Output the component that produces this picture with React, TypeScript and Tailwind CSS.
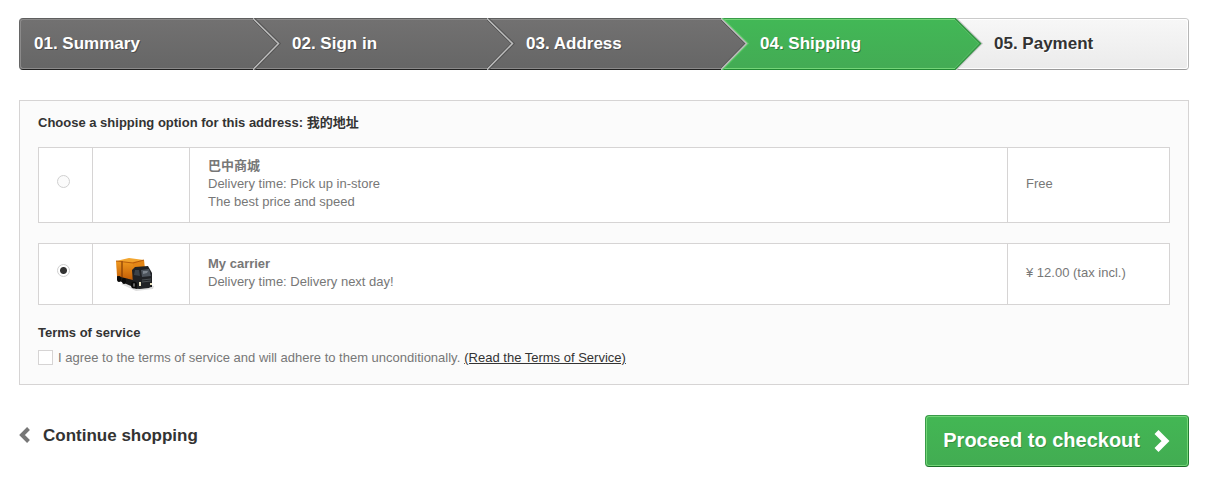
import { useState } from "react"
import clsx from "clsx"

const steps = [
  { label: "01. Summary", state: "done" },
  { label: "02. Sign in", state: "done" },
  { label: "03. Address", state: "done" },
  { label: "04. Shipping", state: "current" },
  { label: "05. Payment", state: "todo" },
]

const carriers = [
  {
    id: "store",
    name: "巴中商城",
    lines: ["Delivery time: Pick up in-store", "The best price and speed"],
    price: "Free",
    hasLogo: false,
  },
  {
    id: "carrier",
    name: "My carrier",
    lines: ["Delivery time: Delivery next day!"],
    price: "¥ 12.00 (tax incl.)",
    hasLogo: true,
  },
]

const stepStyles: Record<string, string> = {
  done: "border-t-[#5f5f5f] border-b-[#222222] border-x-[#666666] from-[#727171] to-[#666666] text-white [text-shadow:1px_1px_rgba(0,0,0,0.3)]",
  current:
    "border-t-[#399b49] border-b-[#208931] border-x-[#369946] from-[#42b856] to-[#43ab54] text-white [text-shadow:1px_1px_rgba(0,0,0,0.3)]",
  todo: "border-t-[#cacaca] border-b-[#9a9a9a] border-x-[#b7b7b7] from-[#f7f7f7] to-[#ebebeb] text-[#333333] [text-shadow:1px_1px_#ffffff]",
}

const innerStyles: Record<string, string> = {
  done: "border-[#8b8a8a]",
  current: "border-[#74d578]",
  todo: "border-white",
}

// Point of the previous step, laid over the start of the next one
function StepArrow({ from, to }: { from: string; to: string }) {
  const green = from === "current"
  const id = `arrow-${from}-${to}`
  const outer = to === "done" ? "#555555" : to === "current" ? "#5ccb68" : "#cfcccf"
  return (
    <svg className="absolute top-0 left-0 h-[52px] w-[30px]" viewBox="0 0 30 52" aria-hidden="true">
      <defs>
        <linearGradient id={id} x1="0" y1="0" x2="0" y2="1">
          <stop offset="0" stopColor={green ? "#42b856" : "#727171"} />
          <stop offset="1" stopColor={green ? "#43ab54" : "#666666"} />
        </linearGradient>
      </defs>
      <path d="M0 0L25.5 25.5L0 52Z" fill={`url(#${id})`} />
      <path d="M1 0L27 25.5L1 52" fill="none" stroke={outer} strokeWidth="1.5" />
      <path d="M-2 0L24 25.5L-2 52" fill="none" stroke={green ? "#5fc56c" : "#4c4c4c"} strokeWidth="1" />
      <path d="M-0.5 0L25.5 25.5L-0.5 52" fill="none" stroke={green ? "#349444" : "#bcbcbc"} strokeWidth="1.5" />
    </svg>
  )
}

function TruckLogo() {
  return (
    <svg className="block h-10 w-[60px]" viewBox="0 0 60 40" role="img" aria-label="My carrier">
      <defs>
        <linearGradient id="cargo" x1="0" y1="0" x2="0" y2="1">
          <stop offset="0" stopColor="#f09a20" />
          <stop offset="1" stopColor="#c25c05" />
        </linearGradient>
      </defs>
      <path d="M10 31L25 38L42 36L43 33L20 28Z" fill="#dedede" />
      <path d="M6 22L24 27L41 30V34L25 36L20 33L6 27Z" fill="#171717" />
      <path d="M5 8L18 5L33 7L22 10Z" fill="#f2a52f" />
      <path d="M5 8L22 9V27L6 23Z" fill="url(#cargo)" />
      <path d="M22 9L33 7L34 16H22Z" fill="#e38515" />
      <path d="M11 8V24" stroke="#823c05" strokeWidth="1.2" fill="none" />
      <path d="M5 8L22 10L33 7" stroke="#a94e06" strokeWidth="0.8" fill="none" />
      <path d="M21 17L24 14L37 13L41 20V32L38 35L28 36L22 31Z" fill="#202225" />
      <path d="M30 17L38 16L40 23L31 24Z" fill="#4d545c" />
      <path d="M24 17L28 17L29 23L23 22Z" fill="#3b4249" />
      <path d="M32 18L37 18L36 20L32 21Z" fill="#7d858d" />
      <path d="M31 27L40 26M31 29L40 28" stroke="#565a5e" strokeWidth="0.8" />
      <ellipse cx="8" cy="26" rx="2" ry="3" fill="#090909" />
      <ellipse cx="13" cy="28" rx="2" ry="3" fill="#090909" />
      <ellipse cx="23" cy="32" rx="3" ry="3.5" fill="#090909" />
      <ellipse cx="23" cy="32" rx="1" ry="2" fill="#6b6b6b" />
      <path d="M28 29H30V33H28ZM39 30H41V32H39Z" fill="#e8e0c0" />
    </svg>
  )
}

export default function App() {
  const [selected, setSelected] = useState("carrier")
  const [agreed, setAgreed] = useState(false)

  return (
    <main className="bg-white pt-[18px] pr-[26px] pb-3 pl-[19px] font-['Liberation_Sans','Noto_Sans_CJK_SC',sans-serif] text-[13px] leading-[18px] text-[#777777]">
      <ol className="flex">
        {steps.map((step, i) => (
          <li
            key={step.label}
            aria-current={step.state === "current" ? "step" : undefined}
            className="relative flex h-[52px] flex-1"
          >
            <div
              className={clsx(
                "flex flex-1 border-y bg-linear-to-b text-[17px] font-bold",
                stepStyles[step.state],
                i === 0 && "rounded-l-[4px] border-l",
                i === steps.length - 1 && "rounded-r-[4px] border-r"
              )}
            >
              <span
                className={clsx(
                  "flex flex-1 items-center border-y",
                  innerStyles[step.state],
                  i === 0 ? "rounded-l-[3px] border-l pl-[13px]" : "pl-[39px]",
                  i === steps.length - 1 && "rounded-r-[3px] border-r"
                )}
              >
                {step.label}
              </span>
            </div>
            {i > 0 && <StepArrow from={steps[i - 1].state} to={step.state} />}
          </li>
        ))}
      </ol>

      <section className="mt-[30px] border border-[#d6d4d4] bg-[#fbfbfb] px-[18px] pt-[13px] pb-[17px]">
        <h2 className="mb-[15px] font-bold text-[#333333]">
          Choose a shipping option for this address: 我的地址
        </h2>

        <div className="flex flex-col gap-5">
          {carriers.map((carrier) => (
            <table key={carrier.id} className="w-full table-fixed border-collapse bg-white">
              <tbody>
                <tr className="*:border *:border-[#d6d4d4] *:px-[18px] *:pt-[9px] *:pb-[11px]">
                  <td className="w-[54px]">
                    <input
                      type="radio"
                      name="carrier"
                      aria-label={carrier.name}
                      checked={selected === carrier.id}
                      onChange={() => setSelected(carrier.id)}
                      className="mb-[6px] block size-[13px] appearance-none rounded-full border border-[#d0d0d0] bg-[#fbfbfb] checked:bg-[radial-gradient(circle,#333333_3px,#ffffff_4px)]"
                    />
                  </td>
                  <td className="w-[97px]">{carrier.hasLogo && <TruckLogo />}</td>
                  <td>
                    <strong className="block">{carrier.name}</strong>
                    {carrier.lines.map((line) => (
                      <p key={line}>{line}</p>
                    ))}
                  </td>
                  <td className="w-[162px]">{carrier.price}</td>
                </tr>
              </tbody>
            </table>
          ))}
        </div>

        <h2 className="mt-[19px] mb-[7px] font-bold text-[#333333]">Terms of service</h2>
        <div className="flex items-center">
          <input
            id="terms"
            type="checkbox"
            checked={agreed}
            onChange={(e) => setAgreed(e.target.checked)}
            className="mr-[5px] mb-[2px] size-[15px] appearance-none border border-[#d6d4d4] bg-white checked:bg-[#333333]"
          />
          <label htmlFor="terms" className="mr-1">
            I agree to the terms of service and will adhere to them unconditionally.
          </label>
          <a href="#terms" className="text-[#333333] underline">
            (Read the Terms of Service)
          </a>
        </div>
      </section>

      <div className="mt-[30px] flex items-start justify-between">
        <a href="#shop" className="flex items-center gap-3 pt-3 text-[17px] font-bold text-[#333333]">
          <svg className="mb-[2px] h-4 w-3" viewBox="0 0 12 16" aria-hidden="true">
            <path d="M9.5 1.5L3 8L9.5 14.5" fill="none" stroke="#777777" strokeWidth="4" />
          </svg>
          Continue shopping
        </a>
        <button
          type="button"
          className="flex rounded-[4px] border border-t-[#399a49] border-r-[#247f32] border-b-[#1a6d27] border-l-[#399a49] bg-linear-to-b from-[#43b754] to-[#42ac52] text-[20px] leading-6 font-bold text-white [text-shadow:1px_1px_rgba(0,0,0,0.2)]"
        >
          <span className="flex h-[50px] items-center gap-[13px] rounded-[3px] border border-[#74d578] px-4 pb-[2px]">
            Proceed to checkout
            <svg className="mt-[2px] h-6 w-[18px]" viewBox="0 0 18 24" aria-hidden="true">
              <path d="M3.5 3L12.5 12L3.5 21" fill="none" stroke="white" strokeWidth="5.6" />
            </svg>
          </span>
        </button>
      </div>
    </main>
  )
}
